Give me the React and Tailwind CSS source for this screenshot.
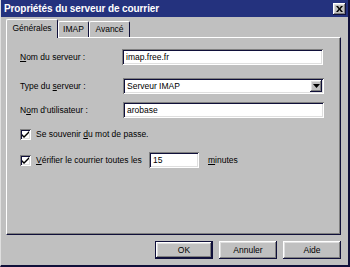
import React from 'react';

const raised = 'shadow-[inset_-1px_-1px_#10103a,inset_1px_1px_#ffffff,inset_-2px_-2px_#808080,inset_2px_2px_#dfdfdf]';
const sunken = 'shadow-[inset_1px_1px_#808080,inset_-1px_-1px_#ffffff,inset_2px_2px_#10103a,inset_-2px_-2px_#dfdfdf]';

function U({ children }) {
  return <span className="underline underline-offset-[1px]">{children}</span>;
}

function Field({ value, className = '' }) {
  return (
    <div className={`h-[16px] bg-white ${sunken} flex items-center pl-[4px] ${className}`}>
      <span>{value}</span>
    </div>
  );
}

function Check() {
  return (
    <div className={`w-[11px] h-[11px] bg-white ${sunken} flex items-center justify-center shrink-0`}>
      <svg width="7" height="7" viewBox="0 0 7 7">
        <path d="M0 3 L2 5 L7 0 L7 2 L2 7 L0 5 Z" fill="#000" />
      </svg>
    </div>
  );
}

function Button({ label, isDefault }) {
  return (
    <div className={`w-[58px] h-[18px] flex items-center justify-center ${isDefault ? 'border border-[#10103a]' : ''}`}>
      <div className={`w-full h-full flex items-center justify-center ${raised}`}>{label}</div>
    </div>
  );
}

export default function App() {
  return (
    <div className="w-[350px] h-[267px] bg-[#c0c0c0] flex flex-col border-l border-l-[#dfdfdf] border-r-2 border-b-2 border-r-[#10103a] border-b-[#10103a] font-['Liberation_Sans',Arial,sans-serif] text-[8.5px] text-black leading-none">
      {/* Title bar */}
      <div className="h-[17px] bg-[#24327e] flex items-center justify-between pl-[3px] pr-[2px]">
        <span className="text-white font-bold text-[10px] tracking-[-0.1px]">Propriétés du serveur de courrier</span>
        <div className={`w-[13px] h-[12px] bg-[#c0c0c0] ${raised} flex items-center justify-center`}>
          <svg width="7" height="6" viewBox="0 0 7 6">
            <path d="M0 0 L2 0 L3.5 2 L5 0 L7 0 L4.5 3 L7 6 L5 6 L3.5 4 L2 6 L0 6 L2.5 3 Z" fill="#000" />
          </svg>
        </div>
      </div>

      <div className="flex-1 flex flex-col pl-[5px] pr-[7px] pt-[2px]">
        {/* Tabs */}
        <div className="h-[18px] flex items-end relative z-10">
          <div className="h-[19px] w-[52px] -mb-px bg-[#c0c0c0] border-t border-l border-white border-r border-r-[#10103a] rounded-t-[2px] flex items-center justify-center pb-[2px]">
            Générales
          </div>
          <div className="h-[16px] w-[31px] border-t border-l border-white border-r border-r-[#10103a] rounded-t-[2px] flex items-center justify-center">
            IMAP
          </div>
          <div className="h-[16px] w-[41px] border-t border-l border-white border-r border-r-[#10103a] rounded-t-[2px] flex items-center justify-center">
            Avancé
          </div>
        </div>

        {/* Panel */}
        <div className="h-[198px] border-t border-l border-white border-r border-b border-r-[#10103a] border-b-[#10103a] shadow-[inset_-1px_-1px_#808080] flex flex-col pt-[11px] pl-[13px]">
          <div className="flex items-center h-[16px]">
            <span className="w-[102px]"><U>N</U>om du serveur :</span>
            <Field value="imap.free.fr" className="w-[201px]" />
          </div>
          <div className="flex items-center h-[16px] mt-[13px]">
            <span className="w-[103px]">Type du <U>s</U>erveur :</span>
            <div className={`w-[201px] h-[16px] bg-white ${sunken} flex items-center justify-between pl-[4px] pr-[2px]`}>
              <span>Serveur IMAP</span>
              <div className={`w-[12px] h-[12px] bg-[#c0c0c0] ${raised} flex items-center justify-center`}>
                <svg width="7" height="4" viewBox="0 0 7 4">
                  <path d="M0 0 L7 0 L3.5 4 Z" fill="#000" />
                </svg>
              </div>
            </div>
          </div>
          <div className="flex items-center h-[16px] mt-[8px]">
            <span className="w-[103px]">N<U>o</U>m d'utilisateur :</span>
            <Field value="arobase" className="w-[201px]" />
          </div>
          <div className="flex items-center h-[14px] mt-[9px]">
            <Check />
            <span className="ml-[5px]">Se souvenir <U>d</U>u mot de passe.</span>
          </div>
          <div className="flex items-center h-[16px] mt-[11px]">
            <Check />
            <span className="ml-[5px] w-[113px]"><U>V</U>érifier le courrier toutes les</span>
            <Field value="15" className="w-[50px]" />
            <span className="ml-[9px]"><U>m</U>inutes</span>
          </div>
        </div>

        {/* Buttons */}
        <div className="flex justify-end gap-[6px] mt-[6px]">
          <Button label="OK" isDefault />
          <Button label="Annuler" />
          <Button label="Aide" />
        </div>
      </div>
    </div>
  );
}
